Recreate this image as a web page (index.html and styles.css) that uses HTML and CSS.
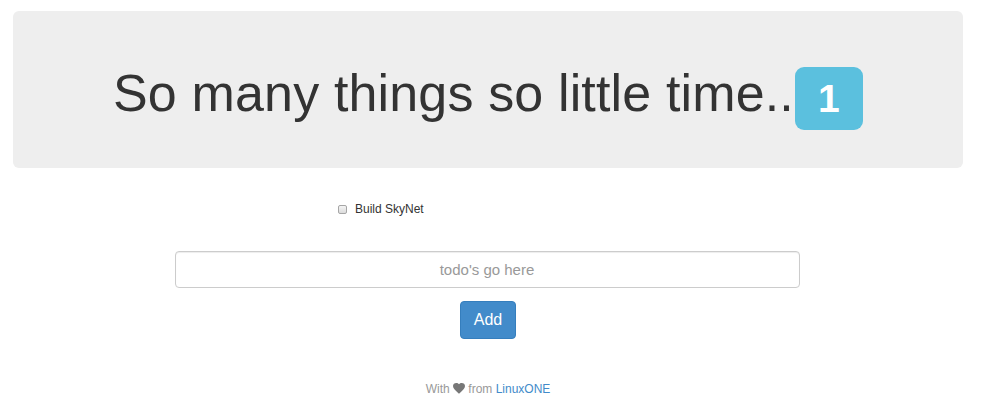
FILE: index.html
```html
<!DOCTYPE html>
<html>
<head>
<meta charset="utf-8">
<link rel="stylesheet" href="styles.css">
</head>
<body>
<div class="page">
  <div class="jumbotron">
    <h1 class="title">So many things so little time..<span class="count">1</span></h1>
  </div>
  <div class="list">
    <label class="item"><input type="checkbox" class="check"><span>Build SkyNet</span></label>
  </div>
  <form class="add-form">
    <input type="text" class="todo-input" placeholder="todo's go here">
    <button type="button" class="btn-add">Add</button>
  </form>
  <footer class="footer">With <svg class="heart" viewBox="0 0 24 22" width="12" height="11"><path d="M12 21.5 10.3 20C4.2 14.5 0 10.7 0 6.2 0 2.5 2.9 0 6.6 0 8.7 0 10.7 1 12 2.5 13.3 1 15.3 0 17.4 0 21.1 0 24 2.5 24 6.2c0 4.5-4.2 8.3-10.3 13.8L12 21.5z" fill="#777"/></svg> from <a href="#" class="link">LinuxONE</a></footer>
</div>
</body>
</html>
```

FILE: styles.css
```css
* { box-sizing: border-box; }
html, body { margin: 0; padding: 0; background: #fff; }
body {
  font-family: "Liberation Sans", Arial, sans-serif;
  color: #333;
}
.page {
  padding: 11px 20px 0 13px;
}
.jumbotron {
  background: #eeeeee;
  border-radius: 6px;
  height: 157px;
  display: flex;
  align-items: center;
  justify-content: center;
}
.title {
  margin: 0;
  font-weight: normal;
  font-size: 52px;
  letter-spacing: 0.15px;
  line-height: 1;
  color: #333;
  display: flex;
  align-items: flex-start;
  padding-top: 18px;
}
.count {
  display: inline-flex;
  align-items: center;
  justify-content: center;
  width: 68px;
  height: 63px;
  margin-left: 1px;
  background: #5bc0de;
  color: #fff;
  font-weight: bold;
  font-size: 39px;
  letter-spacing: 0;
  border-radius: 9px;
}
.list {
  padding: 34px 0 0 325px;
  height: 83px;
}
.item {
  display: flex;
  align-items: center;
  font-size: 12px;
  color: #333;
}
.check {
  -webkit-appearance: none;
  appearance: none;
  width: 9px;
  height: 9px;
  margin: 0 8px 0 0;
  border: 1px solid #a6a6a6;
  border-radius: 2px;
  background: linear-gradient(#f4f4f4, #dcdcdc);
}
.add-form {
  display: flex;
  flex-direction: column;
  align-items: center;
  gap: 13px;
}
.todo-input {
  width: 625px;
  height: 37px;
  margin-right: 2px;
  border: 1px solid #ccc;
  border-radius: 4px;
  text-align: center;
  font-family: inherit;
  font-size: 15px;
  color: #555;
  box-shadow: inset 0 1px 1px rgba(0,0,0,.075);
}
.todo-input::placeholder { color: #999; }
.btn-add {
  width: 56px;
  height: 38px;
  background: #428bca;
  border: 1px solid #357ebd;
  border-radius: 4px;
  color: #fff;
  font-family: inherit;
  font-size: 16px;
  padding: 0;
}
.footer {
  text-align: center;
  font-size: 12px;
  color: #999;
  margin-top: 43px;
}
.heart { vertical-align: -1px; }
.link { color: #428bca; text-decoration: none; }
```
